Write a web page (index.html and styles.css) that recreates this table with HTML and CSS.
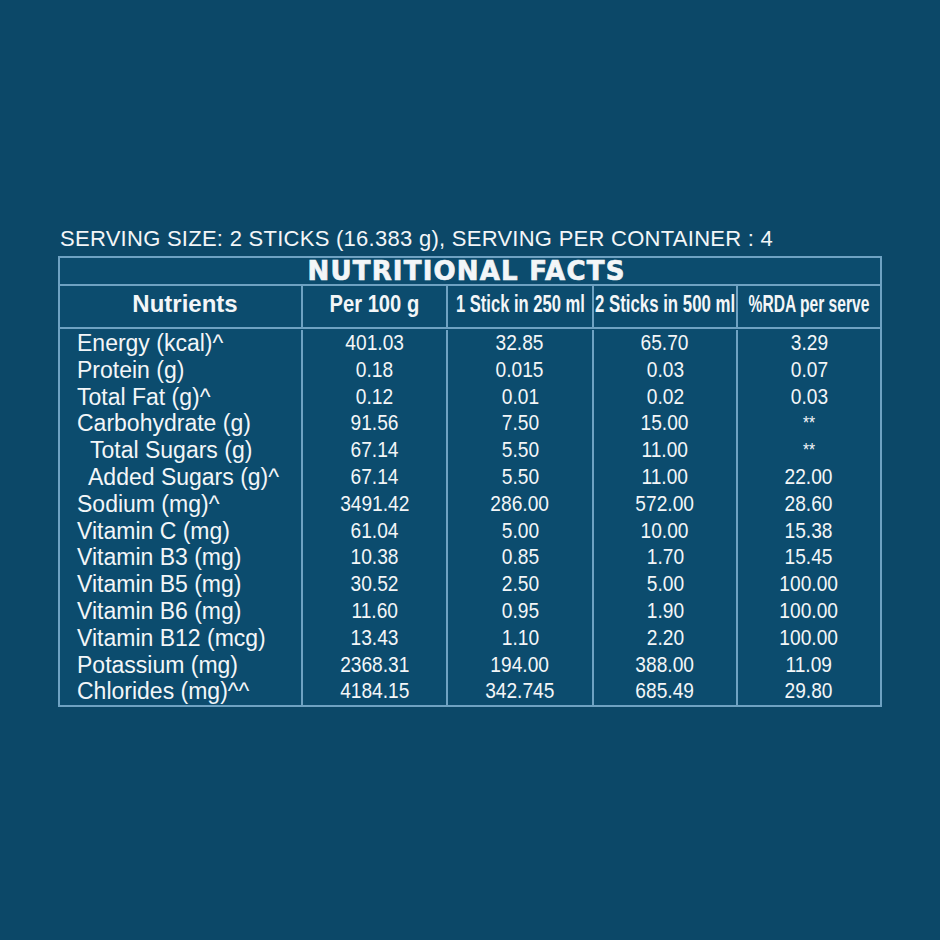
FILE: index.html
```html
<!DOCTYPE html>
<html lang="en">
<head>
<meta charset="utf-8">
<title>Nutritional Facts</title>
<link rel="stylesheet" href="styles.css">
</head>
<body>
<main class="page">
  <p class="serving">SERVING SIZE: 2 STICKS (16.383 g), SERVING PER CONTAINER : 4</p>
  <section class="facts">
    <h1 class="title">NUTRITIONAL FACTS</h1>
    <div class="row head">
      <div class="cell"><span class="hd">Nutrients</span></div>
      <div class="cell"><span class="hd sx84">Per 100 g</span></div>
      <div class="cell"><span class="hd sx69">1 Stick in 250 ml</span></div>
      <div class="cell"><span class="hd sx70">2 Sticks in 500 ml</span></div>
      <div class="cell"><span class="hd sx65">%RDA per serve</span></div>
    </div>
    <div class="body">
      <div class="row"><div class="cell lbl">Energy (kcal)^</div><div class="cell"><span class="n">401.03</span></div><div class="cell"><span class="n">32.85</span></div><div class="cell"><span class="n">65.70</span></div><div class="cell"><span class="n">3.29</span></div></div>
      <div class="row"><div class="cell lbl">Protein (g)</div><div class="cell"><span class="n">0.18</span></div><div class="cell"><span class="n">0.015</span></div><div class="cell"><span class="n">0.03</span></div><div class="cell"><span class="n">0.07</span></div></div>
      <div class="row"><div class="cell lbl">Total Fat (g)^</div><div class="cell"><span class="n">0.12</span></div><div class="cell"><span class="n">0.01</span></div><div class="cell"><span class="n">0.02</span></div><div class="cell"><span class="n">0.03</span></div></div>
      <div class="row"><div class="cell lbl">Carbohydrate (g)</div><div class="cell"><span class="n">91.56</span></div><div class="cell"><span class="n">7.50</span></div><div class="cell"><span class="n">15.00</span></div><div class="cell"><span class="n star">**</span></div></div>
      <div class="row"><div class="cell lbl sub">Total Sugars (g)</div><div class="cell"><span class="n">67.14</span></div><div class="cell"><span class="n">5.50</span></div><div class="cell"><span class="n">11.00</span></div><div class="cell"><span class="n star">**</span></div></div>
      <div class="row"><div class="cell lbl sub2">Added Sugars (g)^</div><div class="cell"><span class="n">67.14</span></div><div class="cell"><span class="n">5.50</span></div><div class="cell"><span class="n">11.00</span></div><div class="cell"><span class="n">22.00</span></div></div>
      <div class="row"><div class="cell lbl">Sodium (mg)^</div><div class="cell"><span class="n">3491.42</span></div><div class="cell"><span class="n">286.00</span></div><div class="cell"><span class="n">572.00</span></div><div class="cell"><span class="n">28.60</span></div></div>
      <div class="row"><div class="cell lbl">Vitamin C (mg)</div><div class="cell"><span class="n">61.04</span></div><div class="cell"><span class="n">5.00</span></div><div class="cell"><span class="n">10.00</span></div><div class="cell"><span class="n">15.38</span></div></div>
      <div class="row"><div class="cell lbl">Vitamin B3 (mg)</div><div class="cell"><span class="n">10.38</span></div><div class="cell"><span class="n">0.85</span></div><div class="cell"><span class="n">1.70</span></div><div class="cell"><span class="n">15.45</span></div></div>
      <div class="row"><div class="cell lbl">Vitamin B5 (mg)</div><div class="cell"><span class="n">30.52</span></div><div class="cell"><span class="n">2.50</span></div><div class="cell"><span class="n">5.00</span></div><div class="cell"><span class="n">100.00</span></div></div>
      <div class="row"><div class="cell lbl">Vitamin B6 (mg)</div><div class="cell"><span class="n">11.60</span></div><div class="cell"><span class="n">0.95</span></div><div class="cell"><span class="n">1.90</span></div><div class="cell"><span class="n">100.00</span></div></div>
      <div class="row"><div class="cell lbl">Vitamin B12 (mcg)</div><div class="cell"><span class="n">13.43</span></div><div class="cell"><span class="n">1.10</span></div><div class="cell"><span class="n">2.20</span></div><div class="cell"><span class="n">100.00</span></div></div>
      <div class="row"><div class="cell lbl">Potassium (mg)</div><div class="cell"><span class="n">2368.31</span></div><div class="cell"><span class="n">194.00</span></div><div class="cell"><span class="n">388.00</span></div><div class="cell"><span class="n">11.09</span></div></div>
      <div class="row"><div class="cell lbl">Chlorides (mg)^^</div><div class="cell"><span class="n">4184.15</span></div><div class="cell"><span class="n">342.745</span></div><div class="cell"><span class="n">685.49</span></div><div class="cell"><span class="n">29.80</span></div></div>
    </div>
  </section>
</main>
</body>
</html>
```

FILE: styles.css
```css
html, body {
  margin: 0;
  padding: 0;
  background: #0c4868;
}

body {
  width: 940px;
  height: 940px;
  overflow: hidden;
  color: #f3f6f8;
  font-family: "Liberation Sans", Arial, sans-serif;
}

.page {
  padding-top: 226px;
}

.serving {
  margin: 0 0 4px 60px;
  font-size: 22px;
  line-height: 26px;
  letter-spacing: 0.27px;
  white-space: nowrap;
}

.facts {
  margin-left: 58px;
  width: 824px;
  box-sizing: border-box;
  border: 2px solid #6fa2c2;
  background: #0c4c6e;
}

.title {
  margin: 0;
  height: 26px;
  border-bottom: 2px solid #6fa2c2;
  font-family: "DejaVu Sans", sans-serif;
  font-weight: 700;
  font-size: 26px;
  line-height: 26px;
  letter-spacing: 1.2px;
  text-align: center;
  padding-right: 7px;
  -webkit-text-stroke: 0.7px #f3f6f8;
}

.row {
  display: grid;
  grid-template-columns: 241px 145px 146px 144px 144px;
}

.cell {
  display: flex;
  align-items: center;
  justify-content: center;
  white-space: nowrap;
  min-width: 0;
}

.cell + .cell {
  border-left: 2px solid #6fa2c2;
}

.head {
  height: 41px;
  border-bottom: 2px solid #6fa2c2;
}

.head .cell {
  padding-bottom: 6px;
  box-sizing: border-box;
}

.hd {
  display: inline-block;
  font-weight: 700;
  font-size: 24px;
  line-height: 28px;
}

.head .cell:first-child .hd {
  margin-left: 9px;
}

.sx84 { transform: scaleX(0.84); }
.sx69 { transform: scaleX(0.69); }
.sx70 { transform: scaleX(0.70); }
.sx65 { transform: scaleX(0.65); }

.body {
  padding-top: 1px;
}

.body .row {
  height: 26.8px;
}

.lbl {
  justify-content: flex-start;
  padding-left: 17px;
  font-size: 23px;
  line-height: 26.8px;
}

.lbl.sub {
  padding-left: 30px;
}

.lbl.sub2 {
  padding-left: 28px;
}

.n {
  display: inline-block;
  font-size: 22px;
  line-height: 26.8px;
  transform: scaleX(0.87);
}

.n.star {
  font-size: 18px;
}
```
